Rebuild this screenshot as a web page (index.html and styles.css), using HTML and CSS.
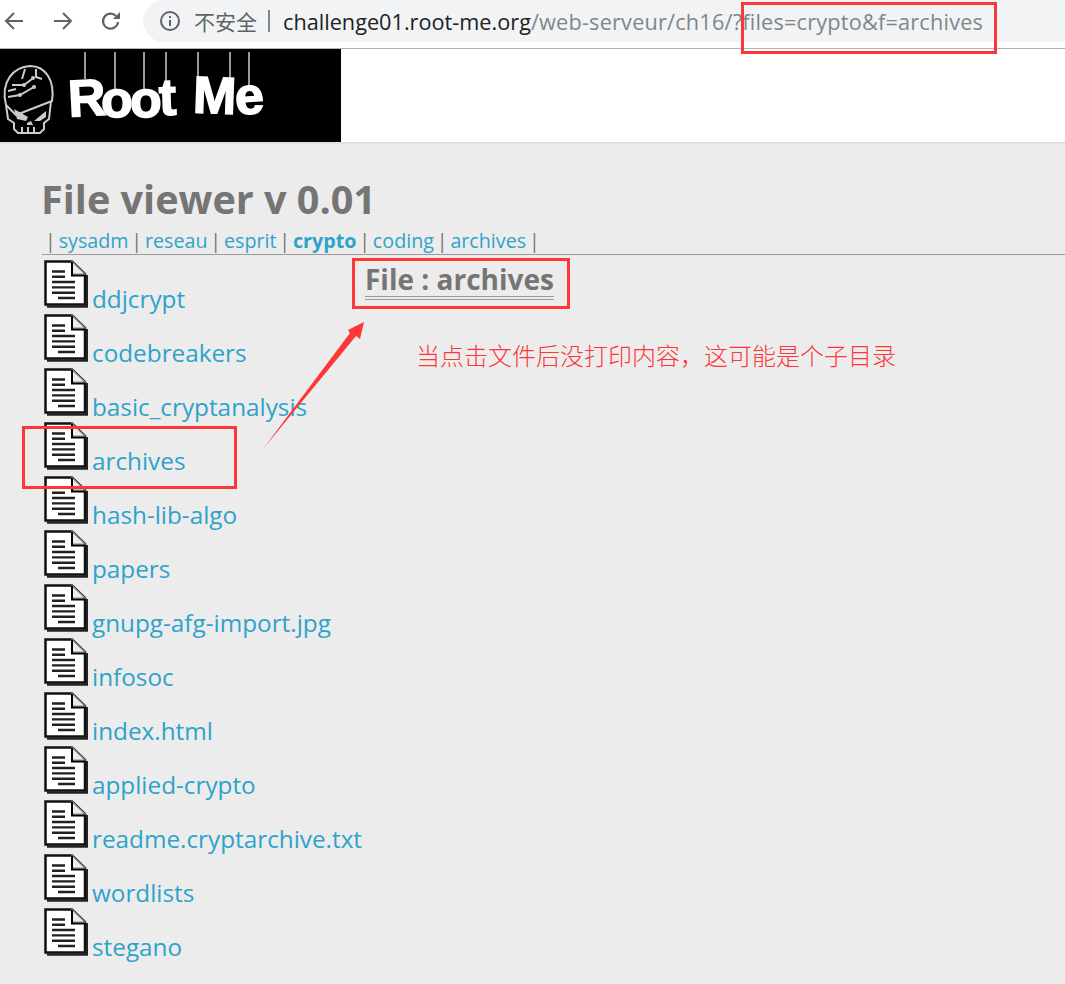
FILE: index.html
```html
<!DOCTYPE html>
<html lang="en">
<head>
    <meta charset="UTF-8">
    <meta name="viewport" content="width=device-width, initial-scale=1.0">
    <title>File viewer</title>
    <link rel="stylesheet" href="styles.css">
</head>
<body>
    <svg class="defs" width="0" height="0">
        <symbol id="doc" viewBox="0 0 44 48">
            <path d="M1.500 1.500H28L41 14V44.500H1.500Z" fill="#fff" stroke="#111" stroke-width="2.500"/>
            <path d="M3 46.500H43V15" fill="none" stroke="#222" stroke-width="2.500"/>
            <path d="M28 1.500V14H41Z" fill="#ececec" stroke="#888" stroke-width="1.200"/>
            <path d="M28 2V15.500H40" fill="none" stroke="#000" stroke-width="2"/>
            <path d="M8 11.500H21M8 16.800H21M8 22H31M8 27.400H31M8 32.700H31M14 38H31" fill="none" stroke="#222" stroke-width="2.400"/>
        </symbol>
    </svg>

    <!-- browser toolbar -->
    <div class="toolbar">
        <svg class="nav-icon nav-back" width="22" height="22" viewBox="0 0 22 22"><path d="M20 11H3M11 3l-8 8 8 8" fill="none" stroke="#5f6368" stroke-width="2"/></svg>
        <svg class="nav-icon nav-forward" width="22" height="22" viewBox="0 0 22 22"><path d="M2 11H19M11 3l8 8-8 8" fill="none" stroke="#5f6368" stroke-width="2"/></svg>
        <svg class="nav-icon nav-reload" width="22" height="22" viewBox="0 0 22 22"><path d="M18 12a7.500 7.500 0 1 1-2-6" fill="none" stroke="#5f6368" stroke-width="2.200"/><path d="M20 2v7h-7z" fill="#5f6368"/></svg>
        <div class="omnibox">
            <svg class="info-icon" width="22" height="22" viewBox="0 0 22 22"><circle cx="11" cy="11" r="9" fill="none" stroke="#5f6368" stroke-width="2"/><path d="M10 10h2v6h-2zM10 6h2v2h-2z" fill="#5f6368"/></svg>
            <span class="insecure">不安全</span>
            <span class="divider"></span>
            <span class="url"><span class="host">challenge01.root-me.org</span><span class="path">/web-serveur/ch16/?files=crypto&amp;f=archives</span></span>
        </div>
    </div>

    <div class="header">
        <div class="logo">
            <svg width="341" height="93" viewBox="0 0 341 93">
                <g stroke="#ccc" stroke-width="1.500">
                    <path d="M85 3V30M115 3V44M144 3V44M166 3V33M198 3V29M230 3V31M249 3V42"/>
                </g>
                <g fill="none" stroke="#ccc" stroke-width="2">
                    <path d="M6 56C0 32 14 18 30 17C46 17 55 32 52 52L16 66Z"/>
                    <path d="M6 56L8 70L14 74V80L18 84H40L44 80V74L49 70L51 52"/>
                    <path d="M12 36H24L32 30M25 20L22 30M36 20V28L42 30M8 48L20 46L34 38M8 42L16 40"/>
                    <path d="M22 78V84M28 78V84M34 78V84"/>
                </g>
                <g fill="#ccc">
                    <circle cx="24" cy="36" r="2"/>
                    <circle cx="33" cy="29" r="2"/>
                    <circle cx="20" cy="46" r="2"/>
                    <circle cx="34" cy="38" r="2"/>
                    <path d="M14 60L28 68L26 72L17 70ZM34 72L46 62V68L40 72ZM27 74L31 72L33 76H27Z"/>
                </g>
                <g class="logo-text" fill="#fff" stroke="#fff">
                    <text x="68" y="67" transform="rotate(-3 85 50)">R</text>
                    <text x="101" y="68">o</text>
                    <text x="130" y="68">o</text>
                    <text x="159" y="66" transform="rotate(-2 170 50)">t</text>
                    <text x="193" y="64" transform="rotate(2 210 50)">M</text>
                    <text x="235" y="65" transform="rotate(-4 248 50)">e</text>
                </g>
            </svg>
        </div>
    </div>

    <div class="page">
        <h1 class="title">File viewer v 0.01</h1>
        <div class="menu">
            | <a href="#">sysadm</a> | <a href="#">reseau</a> | <a href="#">esprit</a> | <a href="#"><b>crypto</b></a> | <a href="#">coding</a> | <a href="#">archives</a> |
        </div>
        <hr class="rule">
        <div class="content">
            <ul class="files">
                <li><svg class="doc"><use href="#doc"/></svg><a href="#">ddjcrypt</a></li>
                <li><svg class="doc"><use href="#doc"/></svg><a href="#">codebreakers</a></li>
                <li><svg class="doc"><use href="#doc"/></svg><a href="#">basic_cryptanalysis</a></li>
                <li><svg class="doc"><use href="#doc"/></svg><a href="#">archives</a></li>
                <li><svg class="doc"><use href="#doc"/></svg><a href="#">hash-lib-algo</a></li>
                <li><svg class="doc"><use href="#doc"/></svg><a href="#">papers</a></li>
                <li><svg class="doc"><use href="#doc"/></svg><a href="#">gnupg-afg-import.jpg</a></li>
                <li><svg class="doc"><use href="#doc"/></svg><a href="#">infosoc</a></li>
                <li><svg class="doc"><use href="#doc"/></svg><a href="#">index.html</a></li>
                <li><svg class="doc"><use href="#doc"/></svg><a href="#">applied-crypto</a></li>
                <li><svg class="doc"><use href="#doc"/></svg><a href="#">readme.cryptarchive.txt</a></li>
                <li><svg class="doc"><use href="#doc"/></svg><a href="#">wordlists</a></li>
                <li><svg class="doc"><use href="#doc"/></svg><a href="#">stegano</a></li>
            </ul>
            <div class="viewer">
                <h2 class="file-name">File : archives</h2>
            </div>
        </div>
    </div>

    <!-- red annotations drawn over the screenshot -->
    <div class="mark mark-url"></div>
    <div class="mark mark-title"></div>
    <div class="mark mark-row"></div>
    <svg class="arrow" width="110" height="140" viewBox="0 0 110 140">
        <path d="M3 129L90 13L88 10L104 2L100 19L96 16Z" fill="#fb3737"/>
    </svg>
    <div class="note">当点击文件后没打印内容，这可能是个子目录</div>
</body>
</html>
```

FILE: styles.css
```css
* {
    box-sizing: border-box;
}
html, body {
    margin: 0;
    height: 100%;
}
body {
    position: relative;
    font-family: 'Open Sans', 'Noto Sans CJK SC', sans-serif;
    background-color: #ececec;
    color: #757575;
    overflow: hidden;
}
.defs {
    display: block;
}
a {
    color: #2ea3ca;
    text-decoration: none;
}

/* toolbar */
.toolbar {
    display: flex;
    height: 49px;
    padding-bottom: 6px;
    background-color: #fff;
    border-bottom: 1px solid #b5b5b5;
}
.nav-icon {
    flex: none;
    margin-top: 10px;
}
.nav-back {
    margin-left: 3px;
}
.nav-forward {
    margin-left: 27px;
}
.nav-reload {
    margin-left: 26px;
}
.omnibox {
    flex: 1;
    display: flex;
    align-items: center;
    margin-left: 21px;
    padding-left: 16px;
    background-color: #f1f3f4;
    border-radius: 21px 0 0 21px;
    font-size: 21.7px;
    color: #80868b;
    white-space: nowrap;
}
.insecure {
    margin-left: 13px;
    font-family: 'Noto Sans CJK SC', sans-serif;
    font-size: 21px;
    color: #5f6368;
}
.divider {
    width: 2px;
    height: 22px;
    margin: 0 13px 0 11px;
    background-color: #80868b;
}
.host {
    color: #202124;
}
.path {
    letter-spacing: 0.2px;
}

/* site header */
.header {
    height: 93px;
    background-color: #fff;
    box-shadow: 0 1px 3px rgba(0, 0, 0, 0.1);
}
.logo {
    width: 341px;
    height: 93px;
    background-color: #000;
}
.logo svg {
    display: block;
}
.logo-text {
    font-family: 'Liberation Sans', sans-serif;
    font-weight: 700;
    font-size: 52px;
    stroke-width: 1.500px;
}

/* page */
.page {
    padding-left: 42px;
}
.title {
    margin: 0 0 0 -1px;
    padding-top: 33px;
    font-size: 39.6px;
    line-height: 48px;
    font-weight: 700;
}
.menu {
    padding-left: 3px;
    margin-top: 4px;
    font-size: 19.7px;
    line-height: 27px;
    word-spacing: -2.300px;
}
.rule {
    height: 1px;
    margin: 0;
    border: none;
    background-color: #999;
}
.content {
    display: flex;
}
.files {
    flex: none;
    width: 323px;
    margin: 0;
    padding: 5px 0 0;
    list-style: none;
    white-space: nowrap;
}
.files li {
    height: 54px;
    font-size: 24.3px;
    line-height: 54px;
}
.doc {
    width: 44px;
    height: 48px;
    margin: 0 4px 0 2px;
    vertical-align: baseline;
}
.viewer {
    padding-top: 7px;
}
.file-name {
    display: inline-block;
    margin: 0;
    font-size: 28px;
    line-height: 34px;
    font-weight: 700;
    border-bottom: 4px double #999;
}

/* annotations */
.mark {
    position: absolute;
    border: 3px solid #fb3737;
}
.mark-url {
    left: 741px;
    top: 2px;
    width: 256px;
    height: 52px;
}
.mark-title {
    left: 352px;
    top: 258px;
    width: 218px;
    height: 51px;
}
.mark-row {
    left: 22px;
    top: 426px;
    width: 215px;
    height: 63px;
}
.arrow {
    position: absolute;
    left: 260px;
    top: 320px;
}
.note {
    position: absolute;
    left: 416px;
    top: 338px;
    font-family: 'Noto Sans CJK SC', sans-serif;
    font-size: 24px;
    line-height: 34px;
    font-weight: 300;
    color: #fb3737;
    white-space: nowrap;
}
```
